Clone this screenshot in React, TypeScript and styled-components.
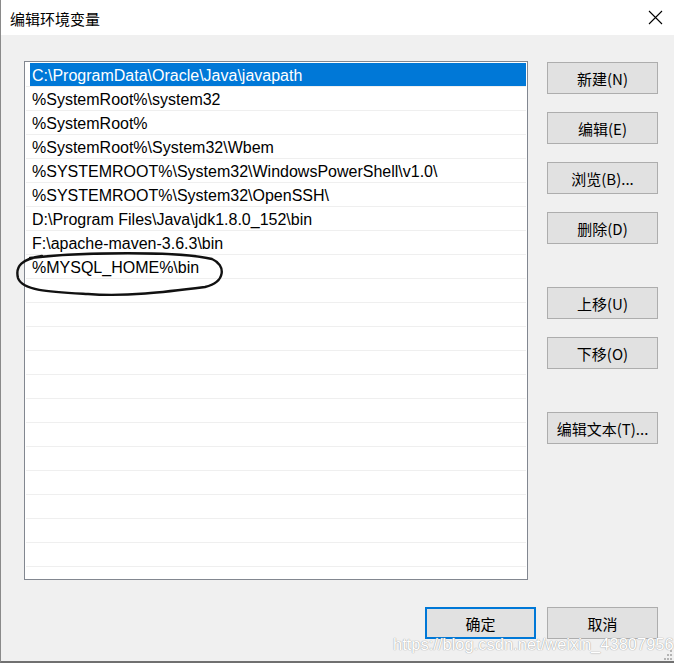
import styled, { createGlobalStyle } from 'styled-components';

const GlobalStyle = createGlobalStyle`
  html, body {
    margin: 0;
    padding: 0;
    background: #f0f0f0;
  }
  * {
    box-sizing: border-box;
  }
`;

const paths = [
  'C:\\ProgramData\\Oracle\\Java\\javapath',
  '%SystemRoot%\\system32',
  '%SystemRoot%',
  '%SystemRoot%\\System32\\Wbem',
  '%SYSTEMROOT%\\System32\\WindowsPowerShell\\v1.0\\',
  '%SYSTEMROOT%\\System32\\OpenSSH\\',
  'D:\\Program Files\\Java\\jdk1.8.0_152\\bin',
  'F:\\apache-maven-3.6.3\\bin',
  '%MYSQL_HOME%\\bin',
];

const TOTAL_ROWS = 21;

const App = () => {
  const rows = [...paths, ...Array(TOTAL_ROWS - paths.length).fill('')];

  return (
    <Window>
      <GlobalStyle />
      <TitleBar>
        <Title>编辑环境变量</Title>
        <CloseButton aria-label="close">
          <svg width="15" height="15" viewBox="0 0 15 15">
            <path d="M1 1 L14 14 M14 1 L1 14" stroke="#000" strokeWidth="1.1" fill="none" />
          </svg>
        </CloseButton>
      </TitleBar>

      <Body>
        <Main>
          <ListBox>
            {rows.map((text, i) => (
              <Row key={i}>
                <Cell $selected={i === 0}>{text}</Cell>
              </Row>
            ))}
          </ListBox>

          <ButtonColumn>
            <ButtonGroup>
              <Button>新建(N)</Button>
              <Button>编辑(E)</Button>
              <Button>浏览(B)...</Button>
              <Button>删除(D)</Button>
            </ButtonGroup>
            <ButtonGroup>
              <Button>上移(U)</Button>
              <Button>下移(O)</Button>
            </ButtonGroup>
            <ButtonGroup>
              <Button>编辑文本(T)...</Button>
            </ButtonGroup>
          </ButtonColumn>
        </Main>

        <Footer>
          <Button $primary>确定</Button>
          <Button>取消</Button>
        </Footer>
      </Body>

      <Scribble width="674" height="663" viewBox="0 0 674 663">
        <path
          d="M30 258 C 80 252, 180 251, 212 259 C 226 265, 226 282, 205 287 C 165 292, 125 297, 88 294 C 52 292, 22 291, 18 278 C 15 266, 22 259, 42 256"
          stroke="#111"
          strokeWidth="2.4"
          fill="none"
          strokeLinecap="round"
        />
      </Scribble>

      <Watermark>https://blog.csdn.net/weixin_43807956</Watermark>

      <Grip width="9" height="10" viewBox="0 0 9 10">
        <rect x="6" y="0" width="2" height="2" fill="#b4b4b4" />
        <rect x="3" y="4" width="2" height="2" fill="#b4b4b4" />
        <rect x="6" y="4" width="2" height="2" fill="#b4b4b4" />
        <rect x="0" y="8" width="2" height="2" fill="#b4b4b4" />
        <rect x="3" y="8" width="2" height="2" fill="#b4b4b4" />
        <rect x="6" y="8" width="2" height="2" fill="#b4b4b4" />
      </Grip>
    </Window>
  );
};

export default App;

const Window = styled.div`
  position: relative;
  width: 674px;
  height: 663px;
  display: flex;
  flex-direction: column;
  background: #f0f0f0;
  border-left: 1px solid #8a8a8a;
  border-bottom: 2px solid #707070;
  overflow: hidden;
`;

const TitleBar = styled.div`
  height: 35px;
  background: #fff;
  display: flex;
  align-items: center;
  justify-content: space-between;
  padding: 0 11px 0 9px;
  flex-shrink: 0;
`;

const Title = styled.div`
  font-family: 'Noto Sans CJK SC', sans-serif;
  font-size: 15px;
  color: #000;
  margin-top: 1px;
`;

const CloseButton = styled.div`
  width: 15px;
  height: 15px;
  display: flex;
`;

const Body = styled.div`
  flex: 1;
  padding: 26px 16px 0 23px;
`;

const Main = styled.div`
  display: flex;
  gap: 19px;
  height: 519px;
`;

const ListBox = styled.div`
  width: 504px;
  height: 519px;
  background: #fff;
  border: 1px solid #828790;
  padding-top: 1px;
  overflow: hidden;
`;

const Row = styled.div`
  height: 24px;
  margin: 0 1px;
  border-bottom: 1px solid #efefef;
  display: flex;
`;

const Cell = styled.div<{ $selected?: boolean }>`
  flex: 1;
  margin-left: 4px;
  height: 23px;
  padding: 1px 0 0 2px;
  line-height: 23px;
  font-family: 'Liberation Sans', Arial, sans-serif;
  font-size: 16px;
  white-space: nowrap;
  color: ${({ $selected }) => ($selected ? '#fff' : '#000')};
  background: ${({ $selected }) => ($selected ? '#0078d7' : 'transparent')};
`;

const ButtonColumn = styled.div`
  display: flex;
  flex-direction: column;
  gap: 43px;
  margin-top: 1px;
`;

const ButtonGroup = styled.div`
  display: flex;
  flex-direction: column;
  gap: 18px;
`;

const Button = styled.div<{ $primary?: boolean }>`
  width: 111px;
  height: 32px;
  display: flex;
  align-items: center;
  justify-content: center;
  background: #e1e1e1;
  border: ${({ $primary }) => ($primary ? '2px solid #0078d7' : '1px solid #adadad')};
  font-family: 'Noto Sans CJK SC', sans-serif;
  font-size: 15px;
  color: #000;
`;

const Footer = styled.div`
  display: flex;
  justify-content: flex-end;
  gap: 11px;
  margin-top: 27px;
`;

const Scribble = styled.svg`
  position: absolute;
  left: -1px;
  top: 0;
  pointer-events: none;
`;

const Watermark = styled.div`
  position: absolute;
  left: 392px;
  top: 635px;
  font-family: 'Liberation Sans', Arial, sans-serif;
  font-size: 16.5px;
  color: #fff;
  text-shadow: 0 0 1px #9a9a9a, 0 0 1px #b0b0b0;
  white-space: nowrap;
  pointer-events: none;
`;

const Grip = styled.svg`
  position: absolute;
  right: 1px;
  bottom: 1px;
`;
